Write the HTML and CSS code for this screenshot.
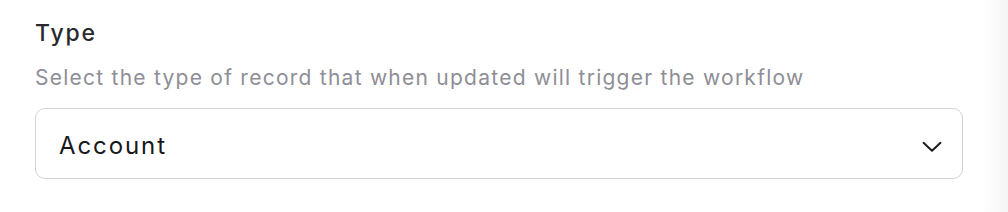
FILE: index.html
```html
<!DOCTYPE html>
<html>
<head>
<meta charset="utf-8">
<link rel="stylesheet" href="styles.css">
</head>
<body>
<div class="page">
  <div class="field">
    <div class="label">Type</div>
    <div class="hint">Select the type of record that when updated will trigger the workflow</div>
    <div class="select">
      <span class="value">Account</span>
      <svg class="chev" width="20" height="12" viewBox="0 0 20 12" fill="none"><path d="M1.5 1.8 L10 9.8 L18.5 1.8" stroke="#18181b" stroke-width="1.9" stroke-linecap="round" stroke-linejoin="round"/></svg>
    </div>
  </div>
</div>
</body>
</html>
```
FILE: styles.css
```css
html, body {
  margin: 0;
  padding: 0;
  height: 100%;
}
body {
  background: linear-gradient(to right, #ffffff 0, #ffffff 982px, #f5f5f6 1008px);
  font-family: "Inter", "DejaVu Sans", sans-serif;
}
.page {
  padding: 19px 0 0 35px;
  width: 928px;
}
.field {
  display: flex;
  flex-direction: column;
}
.label {
  font-size: 23px;
  line-height: 29px;
  letter-spacing: 1.8px;
  color: #2a2a2e;
  font-weight: 500;
}
.hint {
  margin-top: 17px;
  font-size: 21px;
  line-height: 26px;
  letter-spacing: 1.25px;
  color: #8e8e96;
}
.select {
  margin-top: 17px;
  height: 71px;
  box-sizing: border-box;
  border: 1.5px solid #d4d4d8;
  border-radius: 10px;
  display: flex;
  align-items: center;
  justify-content: space-between;
  padding: 3px 20px 0 23px;
  background: #fff;
}
.value {
  font-size: 24px;
  letter-spacing: 1.9px;
  color: #18181b;
}
.chev {
  display: block;
  margin-top: 3px;
}
```
